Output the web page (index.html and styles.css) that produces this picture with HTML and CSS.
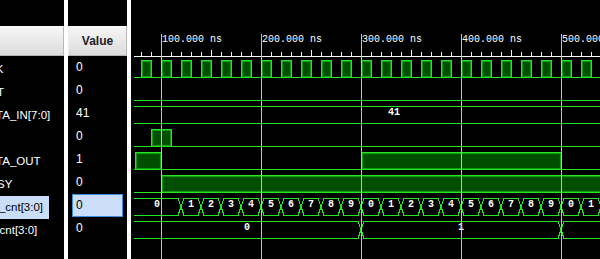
FILE: index.html
```html
<!DOCTYPE HTML>
<html lang="en">
<head>
	<title>ISim - Default.wcfg</title>
	<link rel="stylesheet" href="styles.css">
</head>
<body>
	<div class="sim">
		<!-- Name column -->
		<div class="pane pane-name">
			<div class="pane-head">Name</div>
			<ul class="rows">
				<li><span class="name">CLK</span></li>
				<li><span class="name">RST</span></li>
				<li><span class="name">DATA_IN[7:0]</span></li>
				<li><span class="name">WE</span></li>
				<li><span class="name">DATA_OUT</span></li>
				<li><span class="name">BUSY</span></li>
				<li class="sel"><span class="name">sec_cnt[3:0]</span></li>
				<li><span class="name">deccnt[3:0]</span></li>
			</ul>
		</div>
		<div class="split"></div>
		<!-- Value column -->
		<div class="pane pane-value">
			<div class="pane-head">Value</div>
			<ul class="rows">
				<li><span class="val">0</span></li>
				<li><span class="val">0</span></li>
				<li><span class="val">41</span></li>
				<li><span class="val">0</span></li>
				<li><span class="val">1</span></li>
				<li><span class="val">0</span></li>
				<li class="sel"><span class="val">0</span></li>
				<li><span class="val">0</span></li>
			</ul>
		</div>
		<div class="split"></div>
		<!-- Waveform -->
		<div class="wave">
			<svg class="wave-svg" width="469" height="259" viewBox="131 0 469 259" shape-rendering="crispEdges">
				<defs>
					<g id="clk">
						<rect class="hi" x="141.5" y="60.5" width="10" height="17"/>
						<rect class="hi-in" x="142.5" y="61.5" width="8" height="15"/>
					</g>
					<path id="seg" class="bus" d="M184 198.5H198L201 206.5L198 215.5H184L181 206.5Z"/>
				</defs>

				<!-- time axis -->
				<g class="tl">
					<text x="162" y="42">100.000 ns</text>
					<text x="262" y="42">200.000 ns</text>
					<text x="362" y="42">300.000 ns</text>
					<text x="462" y="42">400.000 ns</text>
					<text x="562" y="42">500.000 ns</text>
				</g>
				<path class="axis" d="M134 56.5H600"/>
				<path class="axis" d="M141.5 52V56M151.5 52V56M171.5 52V56M181.5 52V56M191.5 52V56M201.5 52V56M211.5 50V56M221.5 52V56M231.5 52V56M241.5 52V56M251.5 52V56
					M271.5 52V56M281.5 52V56M291.5 52V56M301.5 52V56M311.5 50V56M321.5 52V56M331.5 52V56M341.5 52V56M351.5 52V56
					M371.5 52V56M381.5 52V56M391.5 52V56M401.5 52V56M411.5 50V56M421.5 52V56M431.5 52V56M441.5 52V56M451.5 52V56
					M471.5 52V56M481.5 52V56M491.5 52V56M501.5 52V56M511.5 50V56M521.5 52V56M531.5 52V56M541.5 52V56M551.5 52V56
					M571.5 52V56M581.5 52V56M591.5 52V56"/>

				<!-- CLK -->
				<path class="lo" d="M134 77.5H600"/>
				<use href="#clk"/>
				<use href="#clk" x="20"/>
				<use href="#clk" x="40"/>
				<use href="#clk" x="60"/>
				<use href="#clk" x="80"/>
				<use href="#clk" x="100"/>
				<use href="#clk" x="120"/>
				<use href="#clk" x="140"/>
				<use href="#clk" x="160"/>
				<use href="#clk" x="180"/>
				<use href="#clk" x="200"/>
				<use href="#clk" x="220"/>
				<use href="#clk" x="240"/>
				<use href="#clk" x="260"/>
				<use href="#clk" x="280"/>
				<use href="#clk" x="300"/>
				<use href="#clk" x="320"/>
				<use href="#clk" x="340"/>
				<use href="#clk" x="360"/>
				<use href="#clk" x="380"/>
				<use href="#clk" x="400"/>
				<use href="#clk" x="420"/>
				<use href="#clk" x="440"/>

				<!-- RST -->
				<path class="lo" d="M134 100.5H600"/>

				<!-- DATA_IN -->
				<path class="bus" d="M134 106.5H600M134 123.5H600"/>
				<text class="bv" x="394" y="115">41</text>

				<!-- WE -->
				<path class="lo" d="M134 146.5H600"/>
				<rect class="hi" x="151.5" y="129.5" width="20" height="17"/>
				<rect class="hi-in" x="152.5" y="130.5" width="18" height="15"/>

				<!-- DATA_OUT -->
				<path class="lo" d="M134 169.5H600"/>
				<rect class="hi" x="135.5" y="152.5" width="26" height="17"/>
				<rect class="hi-in" x="136.5" y="153.5" width="24" height="15"/>
				<rect class="hi" x="361.5" y="152.5" width="200" height="17"/>
				<rect class="hi-in" x="362.5" y="153.5" width="198" height="15"/>

				<!-- BUSY -->
				<path class="lo" d="M134 192.5H161"/>
				<rect class="hi" x="161.5" y="175.5" width="460" height="17"/>
				<rect class="hi-in" x="162.5" y="176.5" width="458" height="15"/>

				<!-- sec_cnt -->
				<path class="bus" d="M134 198.5H178L181 206.5L178 215.5H134"/>
				<use href="#seg"/>
				<use href="#seg" x="20"/>
				<use href="#seg" x="40"/>
				<use href="#seg" x="60"/>
				<use href="#seg" x="80"/>
				<use href="#seg" x="100"/>
				<use href="#seg" x="120"/>
				<use href="#seg" x="140"/>
				<use href="#seg" x="160"/>
				<use href="#seg" x="180"/>
				<use href="#seg" x="200"/>
				<use href="#seg" x="220"/>
				<use href="#seg" x="240"/>
				<use href="#seg" x="260"/>
				<use href="#seg" x="280"/>
				<use href="#seg" x="300"/>
				<use href="#seg" x="320"/>
				<use href="#seg" x="340"/>
				<use href="#seg" x="360"/>
				<use href="#seg" x="380"/>
				<use href="#seg" x="400"/>
				<g class="bv">
					<text x="157" y="207">0</text>
					<text x="191" y="207">1</text>
					<text x="211" y="207">2</text>
					<text x="231" y="207">3</text>
					<text x="251" y="207">4</text>
					<text x="271" y="207">5</text>
					<text x="291" y="207">6</text>
					<text x="311" y="207">7</text>
					<text x="331" y="207">8</text>
					<text x="351" y="207">9</text>
					<text x="371" y="207">0</text>
					<text x="391" y="207">1</text>
					<text x="411" y="207">2</text>
					<text x="431" y="207">3</text>
					<text x="451" y="207">4</text>
					<text x="471" y="207">5</text>
					<text x="491" y="207">6</text>
					<text x="511" y="207">7</text>
					<text x="531" y="207">8</text>
					<text x="551" y="207">9</text>
					<text x="571" y="207">0</text>
					<text x="591" y="207">1</text>
				</g>

				<!-- deccnt -->
				<path class="bus" d="M134 221.5H358L361 229.5L358 238.5H134
					M364 221.5H558L561 229.5L558 238.5H364L361 229.5Z
					M600 221.5H564L561 229.5L564 238.5H600"/>
				<g class="bv">
					<text x="247" y="230">0</text>
					<text x="461" y="230">1</text>
				</g>

				<!-- 100 ns grid -->
				<path class="grid" d="M161.5 34V259M261.5 34V259M361.5 34V259M461.5 34V259M561.5 34V259"/>
			</svg>
		</div>
	</div>
</body>
</html>
```

FILE: styles.css
```css
body {
	margin:0;
	background:#000;
	font-family:"Liberation Sans", Arial, sans-serif;
	overflow:hidden;
	}

.sim {
	display:flex;
	width:600px;
	height:259px;
	}

/* Columns */
.pane {
	padding-top:26px;
	overflow:hidden;
	}
.pane-name {
	width:64px;
	}
.pane-value {
	width:59px;
	}
.split {
	width:4px;
	background:#fff;
	}
.pane-head {
	box-sizing:border-box;
	height:30px;
	border:1px solid;
	border-color:#fbfbfb #b8b8b8 #b4b4b4 #ececec;
	background:linear-gradient(#f6f6f6, #e9e9e9 50%, #dcdcdc);
	color:#1b1b29;
	font-size:12px;
	font-weight:bold;
	line-height:28px;
	text-align:center;
	}
.pane-name .pane-head {
	border-left:none;
	color:transparent;
	}

/* Rows */
.rows {
	list-style:none;
	margin:0;
	padding:0;
	}
	.rows li {
		height:23px;
		line-height:23px;
		color:#fff;
		white-space:nowrap;
		}
	.name {
		display:inline-block;
		margin-left:-19px;
		padding-right:6px;
		font-size:11.5px;
		}
	.sel .name {
		background:#cbdef9;
		color:#000;
		}
	.pane-value li {
		padding:0 4px;
		}
	.val {
		display:block;
		box-sizing:border-box;
		height:23px;
		padding-left:3px;
		border:1px solid transparent;
		font-size:12px;
		line-height:21px;
		}
	.sel .val {
		border-color:#3b8de0;
		background:#cbdef9;
		color:#000;
		}

/* Waveform */
.wave {
	flex:1;
	overflow:hidden;
	}
.wave-svg {
	display:block;
	}
	.wave-svg .lo,
	.wave-svg .bus {
		fill:none;
		stroke:#22e622;
		}
	.wave-svg .hi {
		fill:#004e00;
		stroke:#22e622;
		}
	.wave-svg .hi-in {
		fill:none;
		stroke:#0d9c0d;
		}
	.wave-svg .axis {
		stroke:#fff;
		}
	.wave-svg .grid {
		stroke:#c2c2c2;
		}
	.wave-svg .tl {
		fill:#fff;
		font-family:"Liberation Mono", monospace;
		font-size:10px;
		}
	.wave-svg .bv {
		fill:#fff;
		font-family:"Liberation Mono", monospace;
		font-size:10px;
		font-weight:bold;
		text-anchor:middle;
		}
```
